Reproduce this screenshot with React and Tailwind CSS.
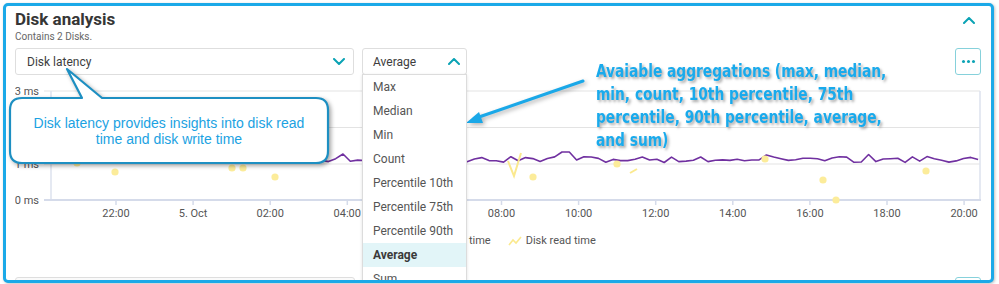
import React from "react";

// x positions of the 2-hour ticks on the time axis (page coords)
const ticks = ["22:00", "5. Oct", "02:00", "04:00", "06:00", "08:00", "10:00", "12:00", "14:00", "16:00", "18:00", "20:00"];
const tickX = (i) => 116 + i * 77.1;

const menuItems = ["Max", "Median", "Min", "Count", "Percentile 10th", "Percentile 75th", "Percentile 90th", "Average", "Sum"];

// Disk write time: noisy line around 1 ms
const buildWriteLine = () => {
  let s = 11;
  const rnd = () => {
    s = (s * 9301 + 49297) % 233280;
    return s / 233280;
  };
  const pts = [];
  for (let x = 51; x <= 980; x += 7.3) {
    let y = 156.5 + rnd() * 6;
    if (Math.abs(x - 566) < 4) y = 152;
    if (Math.abs(x - 867) < 4) y = 154.5;
    if (Math.abs(x - 765) < 4) y = 155;
    if (Math.abs(x - 342) < 4) y = 154;
    pts.push(`${x.toFixed(1)},${y.toFixed(1)}`);
  }
  return pts.join(" ");
};

const writeLine = buildWriteLine();

// Disk read time: mostly isolated samples
const readDots = [
  [77, 163], [115, 172], [232, 168], [243, 168], [275, 177], [533, 177],
  [617, 164], [765, 159], [823, 180], [836, 200], [926, 171],
];

const Chevron = ({ up }) => (
  <svg width="12" height="7" viewBox="0 0 12 7" fill="none">
    <path
      d={up ? "M1 6 L6 1 L11 6" : "M1 1 L6 6 L11 1"}
      stroke="#0ba3b5"
      strokeWidth="2"
      strokeLinecap="round"
      strokeLinejoin="round"
    />
  </svg>
);

const Chart = () => (
  <svg width="966" height="145" className="block">
    <g transform="translate(-15,-80)">
      {/* grid */}
      <line x1="44" y1="91" x2="980" y2="91" stroke="#e3e3e3" />
      <line x1="44" y1="127.5" x2="980" y2="127.5" stroke="#e3e3e3" />
      <line x1="44" y1="164" x2="980" y2="164" stroke="#e3e3e3" />
      <line x1="51" y1="91" x2="51" y2="200" stroke="#dde2ee" strokeWidth="1.5" />
      <line x1="980" y1="91" x2="980" y2="200" stroke="#dde2ee" strokeWidth="1.5" />
      <line x1="44" y1="200" x2="981" y2="200" stroke="#d5dbea" strokeWidth="2" />
      {ticks.map((t, i) => (
        <line key={t} x1={tickX(i)} y1="200" x2={tickX(i)} y2="205" stroke="#d5dbea" strokeWidth="1.5" />
      ))}
      {/* y labels */}
      {[["3 ms", 91], ["2 ms", 127.5], ["1 ms", 164], ["0 ms", 200]].map(([l, y]) => (
        <text key={l} x="39" y={y + 4} textAnchor="end" fontSize="11" fill="#555" fontFamily="Roboto, sans-serif">
          {l}
        </text>
      ))}
      {/* x labels */}
      {ticks.map((t, i) => (
        <text key={t} x={tickX(i)} y="217" textAnchor="middle" fontSize="11" fill="#555" fontFamily="Roboto, sans-serif">
          {t}
        </text>
      ))}
      {/* series */}
      <polyline points={writeLine} fill="none" stroke="#7030a0" strokeWidth="1.6" strokeLinejoin="round" />
      <polyline points="508,161 514,176 521,153" fill="none" stroke="#fbe98e" strokeWidth="2" />
      <polyline points="630,173 637,169" fill="none" stroke="#fbe98e" strokeWidth="2" />
      {readDots.map(([x, y], i) => (
        <circle key={i} cx={x} cy={y} r="3.6" fill="#fcec9a" />
      ))}
    </g>
  </svg>
);

const LegendIcon = ({ color }) => (
  <svg width="14" height="10" viewBox="0 0 14 10" fill="none">
    <polyline points="1,9 5,4 8,7 13,1" stroke={color} strokeWidth="1.6" fill="none" />
  </svg>
);

export default function App() {
  return (
    <div className="relative w-[999px] h-[284px] bg-white overflow-hidden font-['Roboto',sans-serif]">
      {/* highlighted card */}
      <div className="ml-[3px] mt-[3px] w-[991px] h-[280px] border-[3px] border-[#1ba9e8] rounded-[5px] overflow-hidden bg-white pl-[9px] pr-[10px] pt-[3px] shadow-[1px_1px_3px_rgba(0,0,0,0.25)]">
        {/* header */}
        <div className="flex justify-between items-start">
          <div>
            <h2 className="text-[17px] leading-[20px] font-bold text-[#363636]">Disk analysis</h2>
            <p className="text-[10px] leading-[16px] text-[#666]">Contains 2 Disks.</p>
          </div>
          <div className="mt-[8px] mr-[6px]">
            <Chevron up />
          </div>
        </div>

        {/* selectors */}
        <div className="mt-[3px] flex gap-[8px] h-[27px]">
          <div className="w-[339px] h-full border border-[#dedede] rounded-[3px] flex items-center justify-between pl-[11px] pr-[8px] text-[12px] text-[#3d3d3d]">
            <span>Disk latency</span>
            <Chevron />
          </div>
          <div className="relative w-[105px] h-full">
            <div className="h-full border border-[#dedede] rounded-[3px] flex items-center justify-between pl-[10px] pr-[6px] text-[12px] text-[#3d3d3d]">
              <span>Average</span>
              <Chevron up />
            </div>
            <ul className="absolute left-0 top-[26px] w-[105px] bg-white border border-[#dcdcdc] shadow-[0_1px_3px_rgba(0,0,0,0.12)] z-10">
              {menuItems.map((m) => (
                <li
                  key={m}
                  className={
                    m === "Average"
                      ? "h-[24px] flex items-center pl-[10px] text-[12px] font-bold text-[#3a3a3a] bg-[#e2f5f8]"
                      : "h-[24px] flex items-center pl-[10px] text-[12px] text-[#555]"
                  }
                >
                  {m}
                </li>
              ))}
            </ul>
          </div>
          <div className="flex-1" />
          <button className="w-[26px] h-full border border-[#86d1db] rounded-[3px] flex items-center justify-center gap-[2px]">
            <span className="w-[3px] h-[3px] rounded-full bg-[#0ba3b5]" />
            <span className="w-[3px] h-[3px] rounded-full bg-[#0ba3b5]" />
            <span className="w-[3px] h-[3px] rounded-full bg-[#0ba3b5]" />
          </button>
        </div>

        {/* chart */}
        <div className="mt-[5px]">
          <Chart />
        </div>

        {/* legend */}
        <div className="mt-[8px] flex justify-center items-center gap-[17px] text-[11px] leading-[16px] text-[#555]">
          <div className="flex items-center gap-[4px]">
            <LegendIcon color="#7030a0" />
            <span>Disk write time</span>
          </div>
          <div className="flex items-center gap-[4px]">
            <LegendIcon color="#fbe98e" />
            <span>Disk read time</span>
          </div>
        </div>

        {/* next row, clipped */}
        <div className="mt-[28px] flex h-[27px]">
          <div className="w-[340px] h-full border border-[#dedede] rounded-[3px] bg-[#fafafa]" />
          <div className="flex-1" />
          <div className="w-[26px] h-full border border-[#86d1db] rounded-[3px]" />
        </div>
      </div>

      {/* annotations */}
      <svg width="999" height="284" className="absolute left-0 top-0 pointer-events-none">
        <path
          d="M22 98 L82 98 L67 69 L102 98 L316 98 Q328 98 328 110 L328 151 Q328 163 316 163 L22 163 Q10 163 10 151 L10 110 Q10 98 22 98 Z"
          fill="#ffffff"
          stroke="#1d8fc2"
          strokeWidth="2.2"
          strokeLinejoin="round"
          style={{ filter: "drop-shadow(2px 2px 2px rgba(0,0,0,0.35))" }}
        />
        <g style={{ filter: "drop-shadow(2px 2px 2px rgba(0,0,0,0.3))" }}>
          <line x1="583" y1="81" x2="479" y2="117" stroke="#1aa8e8" strokeWidth="3" strokeLinecap="round" />
          <polygon points="466,123 479,112 483,123" fill="#1aa8e8" />
        </g>
      </svg>
      <div className="absolute left-[10px] top-[98px] w-[318px] h-[65px] flex items-center justify-center text-center text-[14px] leading-[16px] text-[#1ba2e2] font-['Liberation_Sans',Arial,sans-serif]">
        Disk latency provides insights into disk read
        <br />
        time and disk write time
      </div>
      <div className="absolute left-[596px] top-[60px] origin-left scale-x-[0.9] whitespace-nowrap text-[17px] leading-[23px] font-black text-[#19aaec] font-['Liberation_Sans_Narrow','DejaVu_Sans_Condensed',sans-serif] [font-stretch:condensed] [text-shadow:2px_2px_3px_rgba(0,0,0,0.35)]">
        Avaiable aggregations (max, median,
        <br />
        min, count, 10th percentile, 75th
        <br />
        percentile, 90th percentile, average,
        <br />
        and sum)
      </div>
    </div>
  );
}
